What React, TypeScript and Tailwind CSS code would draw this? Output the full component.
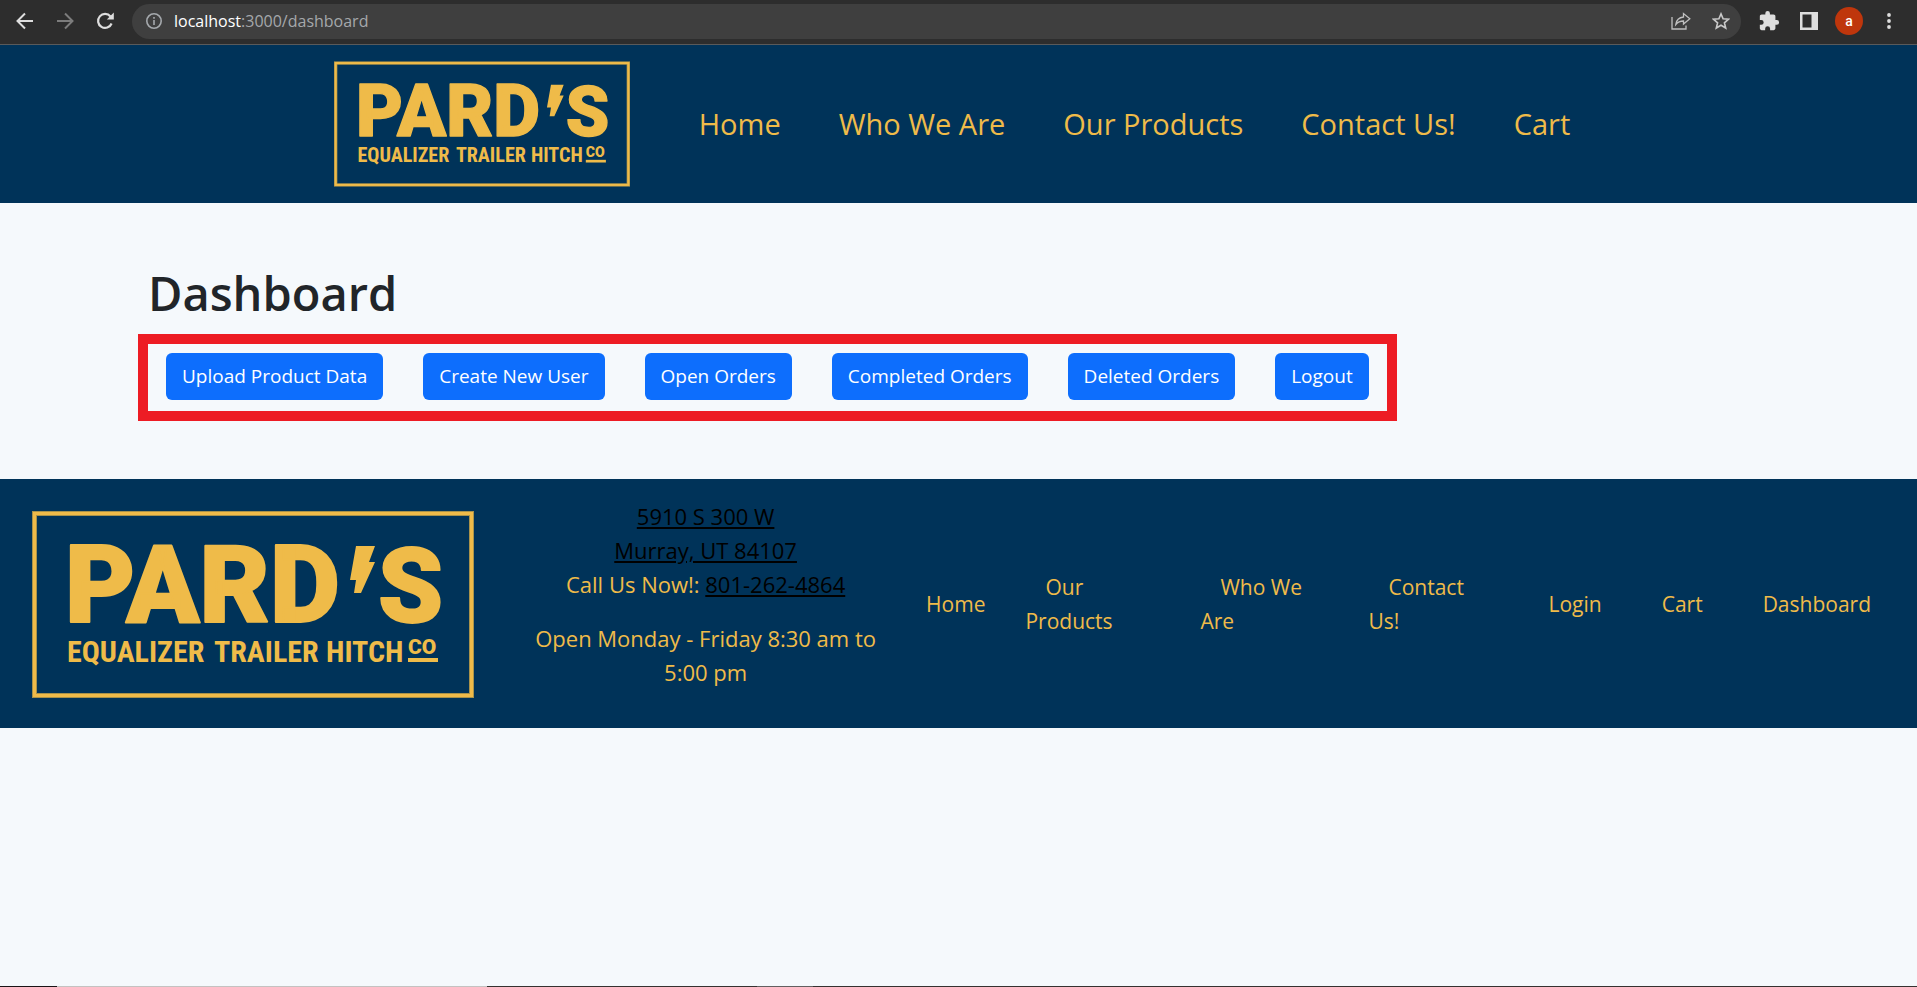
import type { ReactNode } from "react";

const GOLD = "#efbb49";

function Logo({ className }: { className: string }) {
  return (
    <svg viewBox="0 0 442 187" className={className} role="img" aria-label="Pard's Equalizer Trailer Hitch Co">
      <rect x="2.5" y="2.5" width="437" height="182" fill="none" stroke="#a8924b" strokeWidth="5" />
      <rect x="2.5" y="2.5" width="437" height="182" fill="none" stroke={GOLD} strokeWidth="3" />
      <g fill={GOLD} stroke={GOLD} strokeWidth="2" strokeLinejoin="round" fontFamily="Roboto, sans-serif" fontWeight="900">
        <text x="33" y="111" fontSize="108">PARD</text>
        <text x="346" y="111" fontSize="104">S</text>
      </g>
      <path d="M324 35H343L337 51H343L329 82H322L324 69H318Z" fill={GOLD} />
      <g fill={GOLD} fontFamily="'Liberation Sans Narrow', 'Roboto Condensed', Roboto, sans-serif" fontWeight="700">
        <text x="35" y="151" fontSize="30">EQUALIZER</text>
        <text x="182" y="151" fontSize="30">TRAILER</text>
        <text x="294" y="151" fontSize="30">HITCH</text>
      </g>
      <text x="376" y="143" fontSize="21" fontFamily="Roboto, sans-serif" fontWeight="900" fill={GOLD}>CO</text>
      <rect x="376" y="147" width="30" height="4" fill={GOLD} />
    </svg>
  );
}

function ChromeButton({ label, children }: { label: string; children: ReactNode }) {
  return (
    <button type="button" aria-label={label} className="flex size-10 shrink-0 items-center justify-center">
      {children}
    </button>
  );
}

function BrowserBar() {
  return (
    <div className="flex h-[45px] items-center border-b border-[#5a5a5a] bg-[#2d2d2d] pr-2 pb-[2px] pl-[5px] text-[#dedede]">
      <ChromeButton label="Back">
        <svg viewBox="0 0 18 18" className="size-[18px]" fill="none" stroke="currentColor" strokeWidth="2">
          <path d="M17 9H2M9 1.5L1.5 9L9 16.5" />
        </svg>
      </ChromeButton>
      <ChromeButton label="Forward">
        <svg viewBox="0 0 18 18" className="size-[18px] text-[#7c7c7c]" fill="none" stroke="currentColor" strokeWidth="2">
          <path d="M1 9H16M9 1.5L16.5 9L9 16.5" />
        </svg>
      </ChromeButton>
      <ChromeButton label="Reload">
        <svg viewBox="0 0 18 18" className="size-[18px]" fill="none" stroke="currentColor" strokeWidth="2.2">
          <path d="M15.6 11.5A7 7 0 1 1 14.5 4.5" />
          <path d="M17.8 0.5V7.5H10.8Z" fill="currentColor" stroke="none" />
        </svg>
      </ChromeButton>
      <div className="ml-[7px] flex h-[35px] min-w-0 flex-1 items-center rounded-full bg-[#3f3f3f] pl-[14px]">
        <svg viewBox="0 0 16 16" className="size-4 shrink-0 text-[#a5a9ad]" fill="none" stroke="currentColor" strokeWidth="1.6">
          <circle cx="8" cy="8" r="7.2" />
          <path d="M8 7V12M8 4V5.8" />
        </svg>
        <p className="ml-3 flex-1 truncate text-base text-[#a5a8ab]">
          <span className="text-white">localhost</span>:3000/dashboard
        </p>
        <ChromeButton label="Share">
          <svg viewBox="0 0 20 18" className="h-[18px] w-5 text-[#c0c0c0]" fill="none" stroke="currentColor" strokeWidth="1.3">
            <path d="M1 5V17H15V13.5" />
            <path d="M4.8 12.5C5.3 8.6 8 5.5 12.5 5V1.6L18.8 6.8L12.5 12V9C9 9 6.7 10.2 4.8 12.5Z" />
          </svg>
        </ChromeButton>
        <ChromeButton label="Bookmark">
          <svg viewBox="0 0 18 18" className="size-[18px] text-[#c8c8c8]" fill="none" stroke="currentColor" strokeWidth="1.6">
            <path d="M9 1.9L11.1 6.8L16.5 7.2L12.4 10.8L13.7 16L9 13.2L4.3 16L5.6 10.8L1.5 7.2L6.9 6.8Z" />
          </svg>
        </ChromeButton>
      </div>
      <div className="ml-2 flex items-center">
        <ChromeButton label="Extensions">
          <svg viewBox="0 0 24 24" className="size-[22px]" fill="currentColor">
            <path d="M20.5 11H19V7c0-1.1-.9-2-2-2h-4V3.5a2.5 2.5 0 0 0-5 0V5H4c-1.1 0-2 .9-2 2v3.8h1.5a2.7 2.7 0 0 1 0 5.4H2V20c0 1.1.9 2 2 2h3.8v-1.5a2.7 2.7 0 0 1 5.4 0V22H17c1.1 0 2-.9 2-2v-4h1.5a2.5 2.5 0 0 0 0-5z" />
          </svg>
        </ChromeButton>
        <ChromeButton label="Side panel">
          <svg viewBox="0 0 18 18" className="size-[18px]" fill="currentColor" fillRule="evenodd">
            <path d="M0 0H18V18H0ZM2.5 2.5V15.5H11.5V2.5Z" />
          </svg>
        </ChromeButton>
        <ChromeButton label="Profile">
          <span className="flex size-7 items-center justify-center rounded-full bg-[#bf360c] font-['Roboto',sans-serif] text-sm font-medium text-white">
            a
          </span>
        </ChromeButton>
        <ChromeButton label="Menu">
          <svg viewBox="0 0 4 16" className="h-4 w-1" fill="currentColor">
            <circle cx="2" cy="2" r="1.9" />
            <circle cx="2" cy="8" r="1.9" />
            <circle cx="2" cy="14" r="1.9" />
          </svg>
        </ChromeButton>
      </div>
    </div>
  );
}

const headerLinks = ["Home", "Who We Are", "Our Products", "Contact Us!", "Cart"];

const actions = [
  "Upload Product Data",
  "Create New User",
  "Open Orders",
  "Completed Orders",
  "Deleted Orders",
  "Logout",
];

const footerLinks = [
  { label: "Home", width: "" },
  { label: "Our Products", width: "w-[155px]" },
  { label: "Who We Are", width: "w-[148px]" },
  { label: "Contact Us!", width: "w-[140px]" },
  { label: "Login", width: "" },
  { label: "Cart", width: "" },
  { label: "Dashboard", width: "" },
];

export default function App() {
  return (
    <div className="flex min-h-screen flex-col bg-[#f5f9fc] font-['Open_Sans','Noto_Sans',sans-serif]">
      <BrowserBar />

      <header className="flex items-center justify-center bg-[#003359] py-4 pl-4 text-[#efbb49]">
        <Logo className="h-[126px] w-[296px]" />
        <nav className="ml-10">
          <ul className="flex text-[29px] leading-10">
            {headerLinks.map((label) => (
              <li key={label}>
                <a href="#" className="px-[29px]">{label}</a>
              </li>
            ))}
          </ul>
        </nav>
      </header>

      <main className="px-[138px] pt-[60px] pb-[58px]">
        <h1 className="pb-[10px] pl-[10px] text-[47px] leading-[61px] font-semibold text-[#212529]">Dashboard</h1>
        <div className="flex w-fit gap-10 border-10 border-[#ed1c24] px-[18px] pt-[9px] pb-[11px]">
          {actions.map((label) => (
            <button key={label} type="button" className="h-[47px] rounded-md bg-[#0d6efd] px-4 text-[19px] text-white">
              {label}
            </button>
          ))}
        </div>
      </main>

      <footer className="flex items-center bg-[#003359] pt-5 pr-[26px] pb-[19px] pl-8 text-[#efbb49]">
        <Logo className="h-[187px] w-[442px] shrink-0" />
        <div className="mr-7 ml-auto w-[345px] text-center text-[22px] leading-[34px]">
          <p className="mb-5">
            <a href="#" className="text-black underline">
              5910 S 300 W<br />
              Murray, UT 84107
            </a>
            <br />
            Call Us Now!: <a href="#" className="text-black underline">801-262-4864</a>
          </p>
          <p className="mb-5">Open Monday - Friday 8:30 am to 5:00 pm</p>
        </div>
        <nav>
          <ul className="flex items-center gap-5 text-[21px] leading-[34px]">
            {footerLinks.map(({ label, width }) => (
              <li key={label} className={width}>
                <a href="#" className="px-5">{label}</a>
              </li>
            ))}
          </ul>
        </nav>
      </footer>

      <div className="mt-auto flex h-px bg-[#353230]">
        <div className="w-[57px] bg-[#1a1416]" />
        <div className="w-[430px] bg-[#c4c2c1]" />
        <div className="ml-[270px] w-14 bg-[#625f60]" />
      </div>
    </div>
  );
}
